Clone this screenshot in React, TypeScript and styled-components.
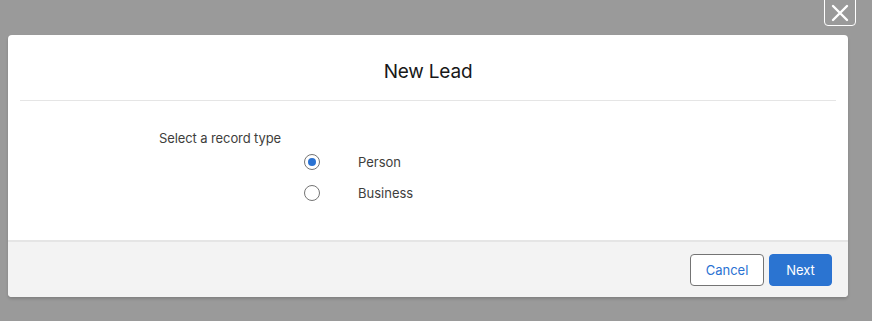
import React, { useState } from "react";
import styled, { createGlobalStyle } from "styled-components";

const Global = createGlobalStyle`
  html, body { margin: 0; padding: 0; }
  body {
    background: #9a9a9a;
    font-family: "Inter", "Roboto", "Liberation Sans", sans-serif;
    width: 872px;
    height: 321px;
    overflow: hidden;
  }
`;

const Page = styled.div`
  position: relative;
  width: 872px;
  height: 321px;
  padding: 35px 24px 0 8px;
  box-sizing: border-box;
`;

const CloseButton = styled.button`
  position: absolute;
  top: -6px;
  left: 824px;
  width: 32px;
  height: 32px;
  box-sizing: border-box;
  border: 1px solid #ffffff;
  border-radius: 4px;
  background: transparent;
  padding: 0;
  display: flex;
  align-items: center;
  justify-content: center;
  padding-top: 5px;
`;

const Modal = styled.div`
  width: 840px;
  background: #ffffff;
  border-radius: 4px;
  box-shadow: 0 2px 3px rgba(0, 0, 0, 0.16);
  overflow: hidden;
  display: flex;
  flex-direction: column;
`;

const Header = styled.div`
  margin: 0 12px;
  height: 65px;
  border-bottom: 1px solid #e5e5e5;
  display: flex;
  align-items: center;
  justify-content: center;
`;

const Title = styled.h2`
  margin: 0;
  padding-top: 7px;
  font-size: 19px;
  font-weight: 400;
  color: #181818;
  letter-spacing: -0.2px;
`;

const Body = styled.div`
  height: 139px;
  padding: 28px 0 0 151px;
  box-sizing: border-box;
`;

const Legend = styled.div`
  font-size: 13px;
  color: #3e3e3c;
  line-height: 18px;
  letter-spacing: -0.1px;
`;

const Options = styled.div`
  display: flex;
  flex-direction: column;
  gap: 13px;
  padding-left: 145px;
  margin-top: 6px;
`;

const Option = styled.label`
  display: flex;
  align-items: center;
  height: 18px;
  font-size: 13px;
  color: #3e3e3c;
  cursor: pointer;
`;

const RadioCircle = styled.span<{ $checked: boolean }>`
  width: 16px;
  height: 16px;
  box-sizing: border-box;
  border-radius: 50%;
  border: 1px solid #747474;
  background: #ffffff;
  display: flex;
  align-items: center;
  justify-content: center;
  margin-right: 38px;
  &::after {
    content: "";
    width: 8px;
    height: 8px;
    border-radius: 50%;
    background: ${(p) => (p.$checked ? "#2a72d2" : "transparent")};
  }
`;

const Footer = styled.div`
  background: #f3f3f3;
  border-top: 2px solid #e5e5e5;
  height: 57px;
  padding: 12px 16px 0 0;
  box-sizing: border-box;
  display: flex;
  justify-content: flex-end;
  align-items: flex-start;
  gap: 5px;
`;

const Button = styled.button<{ $brand?: boolean; $width: number }>`
  width: ${(p) => p.$width}px;
  height: 32px;
  box-sizing: border-box;
  padding: 0;
  border-radius: 4px;
  font-family: inherit;
  font-size: 13px;
  line-height: 30px;
  border: 1px solid ${(p) => (p.$brand ? "#2a72d2" : "#747474")};
  background: ${(p) => (p.$brand ? "#2b74d1" : "#ffffff")};
  color: ${(p) => (p.$brand ? "#ffffff" : "#2a72d2")};
  cursor: pointer;
`;

export default function App() {
  const [value, setValue] = useState("person");
  const options = [
    { id: "person", label: "Person" },
    { id: "business", label: "Business" },
  ];
  return (
    <>
      <Global />
      <Page>
        <CloseButton aria-label="Close">
          <svg width="18" height="18" viewBox="0 0 18 18">
            <path d="M2 2 L16 16 M16 2 L2 16" stroke="#ffffff" strokeWidth="2.4" strokeLinecap="round" />
          </svg>
        </CloseButton>
        <Modal>
          <Header>
            <Title>New Lead</Title>
          </Header>
          <Body>
            <Legend>Select a record type</Legend>
            <Options>
              {options.map((o) => (
                <Option key={o.id} onClick={() => setValue(o.id)}>
                  <RadioCircle $checked={value === o.id} />
                  {o.label}
                </Option>
              ))}
            </Options>
          </Body>
          <Footer>
            <Button $width={74}>Cancel</Button>
            <Button $brand $width={63}>Next</Button>
          </Footer>
        </Modal>
      </Page>
    </>
  );
}
